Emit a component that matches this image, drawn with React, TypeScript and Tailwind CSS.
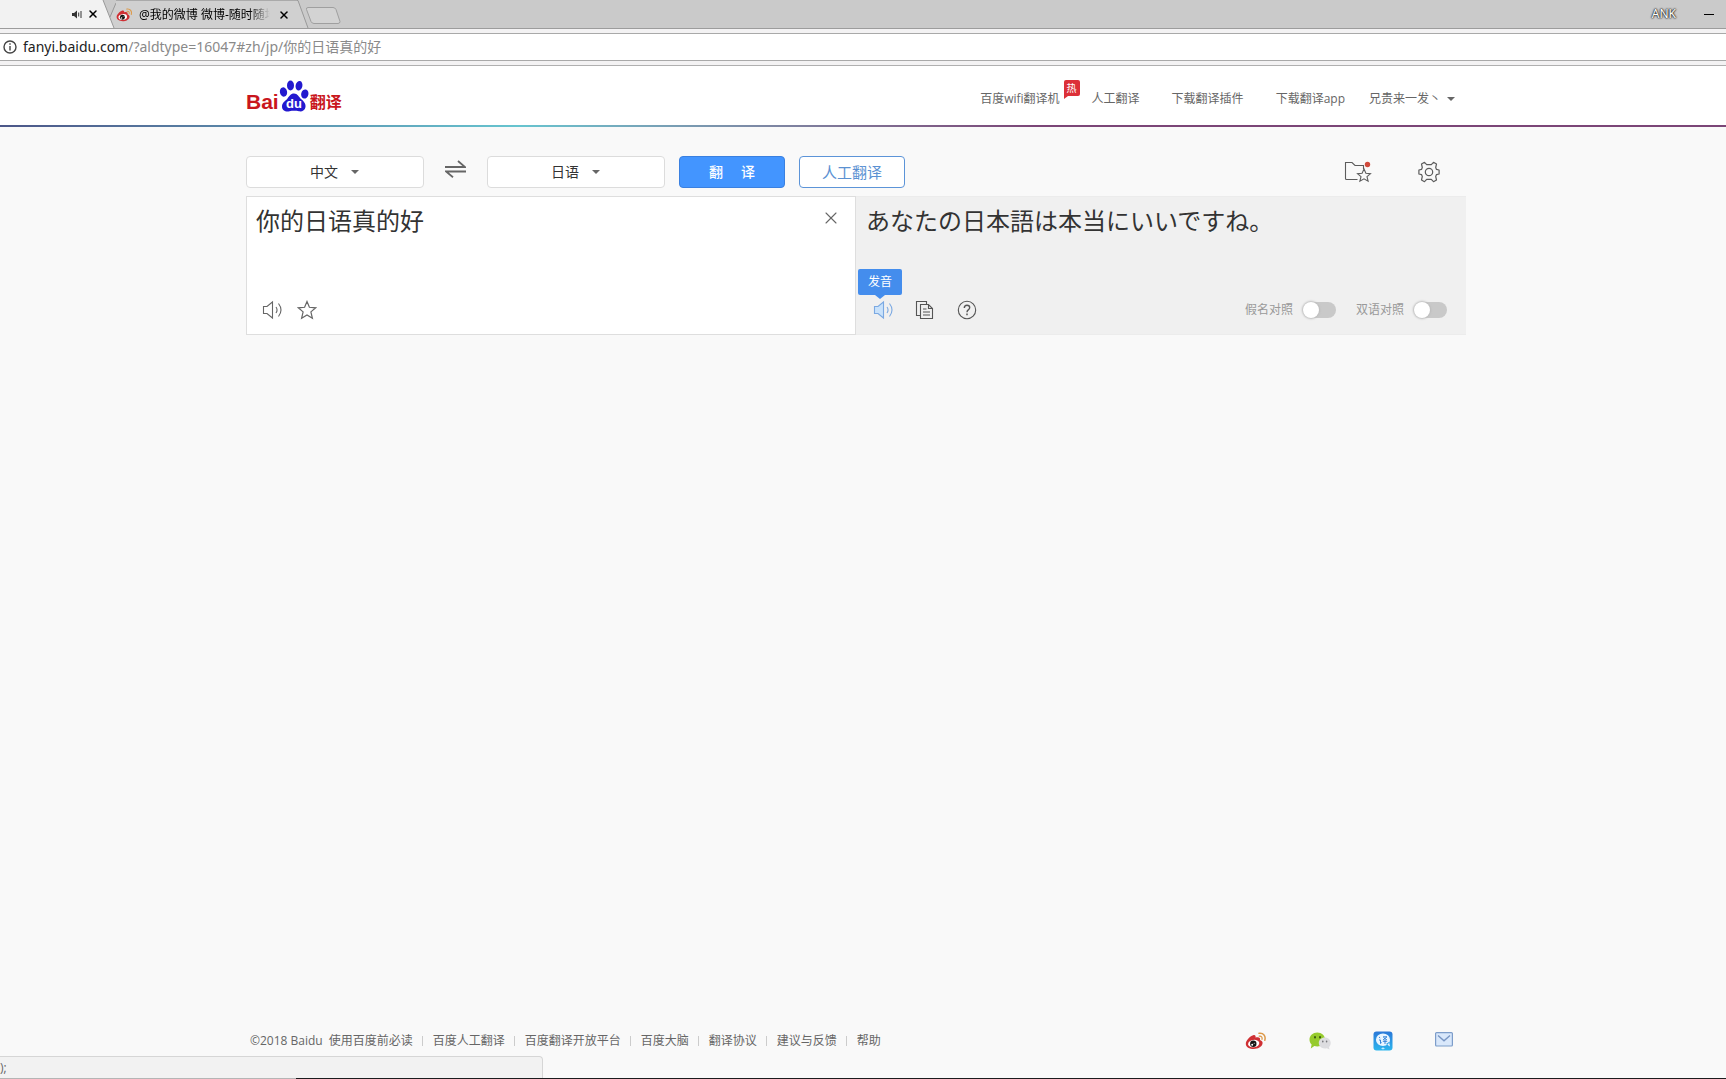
import { useState } from 'react';
import { X } from 'lucide-react';

const navItems = [
  { label: '百度wifi翻译机', hot: true },
  { label: '人工翻译' },
  { label: '下载翻译插件' },
  { label: '下载翻译app' },
];

const footerLinks = [
  '使用百度前必读',
  '百度人工翻译',
  '百度翻译开放平台',
  '百度大脑',
  '翻译协议',
  '建议与反馈',
  '帮助',
];

function WeiboIcon({ className }: { className?: string }) {
  return (
    <svg viewBox="0 0 22 18" className={className} aria-hidden="true">
      <path d="M8.2 3.2C10 2.600 11 3.600 10.500 5.600C13.600 4.600 15.700 5.500 15 8C17 8.700 18 10 17.500 11.800C16.700 15 12.800 17 8.800 17C4.500 17 .8 15 .8 11.700C.8 8.500 4.800 4.300 8.200 3.200Z" fill="#cf3034" />
      <ellipse cx="8.700" cy="11.600" rx="5.600" ry="3.700" fill="#fff" transform="rotate(-8 8.700 11.600)" />
      <circle cx="8.300" cy="11.800" r="3.200" fill="#151515" />
      <circle cx="7.200" cy="12.800" r="1" fill="#fff" />
      <circle cx="9.200" cy="11.200" r=".5" fill="#fff" />
      <path d="M14.300 4.200C16.300 3.800 17.600 5.300 17 7.300" fill="none" stroke="#dd9a4a" strokeWidth="1.300" strokeLinecap="round" />
      <path d="M14 1.300C18.500 .6 21 4 19.800 8.200" fill="none" stroke="#dd9a4a" strokeWidth="1.500" strokeLinecap="round" />
    </svg>
  );
}

function WechatIcon() {
  return (
    <svg viewBox="0 0 22 18" className="h-[18px] w-[22px]" aria-hidden="true">
      <path d="M8.300 .5C12.700 .5 16 3.500 16 7.500C16 11.500 12.700 14.500 8.300 14.500C7.200 14.500 6.200 14.300 5.300 14L1.800 16.600L2.600 12.500C1.200 11.200 .5 9.500 .5 7.500C.5 3.500 4 .5 8.300 .5Z" fill="#96cb2d" />
      <ellipse cx="6" cy="5.300" rx="1" ry="1.300" fill="#3b5a12" />
      <ellipse cx="11" cy="5.300" rx="1" ry="1.300" fill="#3b5a12" />
      <path d="M15.800 5.500C19.300 5.500 21.700 7.900 21.700 11C21.700 12.600 21 14 20 15L20.500 17.400L17.800 16.200C13.200 17.300 9.800 14.600 9.800 11C9.800 7.900 12.300 5.500 15.800 5.500Z" fill="#dddde0" />
      <ellipse cx="13.800" cy="9.500" rx=".8" ry="1.100" fill="#77777b" />
      <ellipse cx="17.600" cy="9.500" rx=".8" ry="1.100" fill="#77777b" />
    </svg>
  );
}

function FanyiAppIcon() {
  return (
    <svg viewBox="0 0 20 20" className="size-5" aria-hidden="true">
      <defs>
        <linearGradient id="appFill" x1="0" y1="0" x2="0" y2="1">
          <stop offset="0" stopColor="#2b78d8" />
          <stop offset="1" stopColor="#2cb6ee" />
        </linearGradient>
      </defs>
      <rect x=".5" y=".5" width="19" height="19" rx="3" fill="url(#appFill)" />
      <path d="M10 2.500A7 6.200 0 1 1 10 15A7 6.200 0 1 1 10 2.500ZM13 13L17 15.500L16 11Z" fill="#e9f5ff" />
      <path d="M6 6L7.200 7M6 9H7.500V12.500L8.700 11.500M10 5.800H14L10 9M10.500 6.500L14 9M9.800 10.300H14.200M12 8.500V13" fill="none" stroke="#2479d4" strokeWidth=".9" />
      <path d="M8.500 17.500H11.500M10 16.300V18.500" stroke="#c9f0ff" strokeWidth=".9" />
    </svg>
  );
}

function MailIcon() {
  return (
    <svg viewBox="0 0 18 15" className="h-[15px] w-[18px]" aria-hidden="true">
      <rect x=".6" y=".6" width="16.800" height="13.400" rx="1" fill="#d9e8fb" stroke="#7d9dca" strokeWidth="1.200" />
      <path d="M3 3.500L9 8.800L15 3.500" fill="none" stroke="#7896c4" strokeWidth="1.400" />
    </svg>
  );
}

function SpeakerIcon({ fill = 'none' }: { fill?: string }) {
  return (
    <svg viewBox="0 0 20 20" className="size-5" fill="none" stroke="currentColor" strokeWidth="1.100" aria-hidden="true">
      <path d="M1.500 6.500H5L10.500 2V18L5 13.500H1.500Z" fill={fill} />
      <path d="M14 7Q16.100 10 14 13M16.500 3.500Q21.500 10 16.500 16.500" />
    </svg>
  );
}

function StarIcon() {
  return (
    <svg viewBox="0 0 20 20" className="size-5" fill="none" stroke="currentColor" strokeWidth="1.200" aria-hidden="true">
      <path d="M10 1.500L12.400 7.300L18.700 7.800L13.900 11.900L15.400 18.300L10 15L4.600 18.300L6.100 11.900L1.300 7.800L7.600 7.300Z" />
    </svg>
  );
}

function CopyIcon() {
  return (
    <svg viewBox="0 0 20 20" className="size-5" fill="none" stroke="currentColor" strokeWidth="1.100" aria-hidden="true">
      <path d="M5 15.500H1.500V1.500H11.500V4" />
      <path d="M5.500 4.500H13.500L17.500 8.500V18.500H5.500ZM13.500 4.500V8.500H17.500M8 9H11.500M8 12H15M8 15H15" />
    </svg>
  );
}

function HelpIcon() {
  return (
    <svg viewBox="0 0 20 20" className="size-5" fill="none" stroke="currentColor" aria-hidden="true">
      <circle cx="10" cy="10" r="8.700" strokeWidth="1.100" />
      <path d="M7.300 8Q7.300 5.200 10 5.200Q12.700 5.200 12.700 7.600Q12.700 9 11.300 9.900Q10 10.800 10 12.200" strokeWidth="1.400" />
      <path d="M10 13.600V15.200" strokeWidth="1.500" />
    </svg>
  );
}

function FolderStarIcon() {
  return (
    <svg viewBox="0 0 28 22" className="h-[22px] w-7" fill="none" stroke="#5c5c5c" strokeWidth="1.100" aria-hidden="true">
      <path d="M13.500 18.500H2.500Q1.500 18.500 1.500 17.500V1.500H8L11 4.500H19.500V8" />
      <path d="M20 8L21.900 12.200L26.500 12.700L23 15.700L24.100 20.200L20 17.800L15.900 20.200L17 15.700L13.500 12.700L18.100 12.200Z" fill="#f9f9f9" />
      <circle cx="23.500" cy="3.500" r="2.700" fill="#d04a3c" stroke="none" />
    </svg>
  );
}

function GearIcon() {
  return (
    <svg viewBox="0 0 22 22" className="size-[22px]" fill="none" stroke="#5c5c5c" strokeWidth="1.200" strokeLinejoin="round" aria-hidden="true">
      <path d="M8.700 3.600L6.500 1.300L3.500 3L4.300 6.500L3.600 8.300L.9 9V13L3.600 13.700L4.300 15.500L3.500 19L6.500 20.700L8.700 18.400H13.300L15.500 20.700L18.500 19L17.700 15.500L18.400 13.700L21.100 13V9L18.400 8.300L17.700 6.500L18.500 3L15.500 1.300L13.300 3.600Z" />
      <circle cx="11" cy="11" r="3.700" />
    </svg>
  );
}

function Caret({ className = '' }: { className?: string }) {
  return (
    <svg viewBox="0 0 8 4" className={`h-1 w-2 ${className}`} fill="#666" aria-hidden="true">
      <path d="M0 0H8L4 4Z" />
    </svg>
  );
}

function BrowserChrome() {
  return (
    <div className="font-['Noto_Sans','Noto_Sans_CJK_SC',sans-serif]">
      {/* Tabs */}
      <div className="flex h-[29px] border-b border-[#9c9c9c] bg-[#cacaca] text-xs text-black">
        <div className="flex w-[102px] items-center justify-end gap-1 bg-[#f2f2f2] pr-[3px]">
          <svg viewBox="0 0 11 9" className="h-[9px] w-[11px]" fill="none" stroke="#333" aria-hidden="true">
            <path d="M0 3H2L5 .5V8.500L2 6H0Z" fill="#333" stroke="none" />
            <path d="M6.700 2.500V6.500M9 1V8" />
          </svg>
          <button aria-label="关闭标签页" className="flex">
            <X className="size-3" strokeWidth={3} />
          </button>
        </div>
        <svg viewBox="0 0 14 28" className="h-7 w-[14px]" aria-hidden="true">
          <path d="M8 17L14 3V28H12Z" fill="#d0d0d0" />
          <path d="M0 0H1L12 28H0Z" fill="#f2f2f2" />
          <path d="M1 0L12 28M8 17L14 3" fill="none" stroke="#999" />
        </svg>
        <div className="flex w-[181px] items-center border-t border-[#aaa] bg-[#d0d0d0] pr-[7px]">
          <WeiboIcon className="h-[14px] w-[17px]" />
          <span className="ml-[6px] bg-linear-to-r from-black from-80% to-transparent to-95% bg-clip-text whitespace-nowrap text-transparent">
            @我的微博 微博-随时随地
          </span>
          <button aria-label="关闭标签页" className="ml-auto flex">
            <X className="size-3" strokeWidth={3} />
          </button>
        </div>
        <svg viewBox="0 0 46 28" className="h-7 w-[46px]" aria-hidden="true">
          <path d="M0 1H1L11 28H0Z" fill="#d0d0d0" />
          <path d="M0 .5H1L11 28" fill="none" stroke="#999" />
          <path d="M11 7.500H36Q38 7.500 39 9.500L43 21.500Q43 23.500 41 23.500H17Q15 23.500 14 21.500L9.500 9.500Q9 7.500 11 7.500Z" fill="#d3d3d3" stroke="#9f9f9f" />
        </svg>
        <div className="ml-auto flex items-center gap-7 pr-3">
          <span className="text-white [text-shadow:0_0_2px_#222,0_0_2px_#222,0_0_1px_#222]">ANK</span>
          <button aria-label="最小化" className="h-px w-[10px] bg-black" />
        </div>
      </div>
      {/* Address bar */}
      <div className="border-b border-[#b0b0b0] bg-[#f3f2f3] py-1">
        <div className="flex h-7 items-center gap-[6px] border-y border-[#a9a9a9] bg-white pl-[3px] text-sm">
          <svg viewBox="0 0 14 14" className="size-[14px]" fill="none" stroke="#444" strokeWidth="1.400" aria-hidden="true">
            <circle cx="7" cy="7" r="6" />
            <path d="M7 6V10.500M7 3.300V4.800" />
          </svg>
          <span className="text-[#8a8a8a]">
            <span className="text-[#222]">fanyi.baidu.com</span>/?aldtype=16047#zh/jp/你的日语真的好
          </span>
        </div>
      </div>
    </div>
  );
}

function Logo() {
  return (
    <a href="#" aria-label="百度翻译" className="flex items-end font-bold text-[#c9161d]">
      <span className="font-['Liberation_Sans',sans-serif] text-[21px] leading-5">Bai</span>
      <svg viewBox="0 0 30 32" className="h-8 w-[30px]" fill="#2319cf" aria-hidden="true">
        <ellipse cx="4.500" cy="12" rx="3.600" ry="4.700" transform="rotate(-12 4.500 12)" />
        <ellipse cx="11.500" cy="5.500" rx="3.500" ry="4.900" />
        <ellipse cx="20" cy="5.800" rx="3.400" ry="4.800" transform="rotate(12 20 5.800)" />
        <ellipse cx="25.800" cy="14" rx="3.600" ry="4.600" transform="rotate(12 25.800 14)" />
        <path d="M15 13.500C18.500 13.500 20 17 22 19C24.500 21 27 23.500 26.500 27C26 30.500 23 31.800 20 31.300C17 30.700 13.500 30.700 10.500 31.300C6.500 32 3 30.500 3 26.500C3 22.500 6.500 21 8.500 18.500C10.300 16.200 11.500 13.500 15 13.500Z" />
        <text x="15" y="28" textAnchor="middle" fontSize="13" fill="#fff" fontFamily="Liberation Sans, sans-serif">du</text>
      </svg>
      <span className="ml-px text-base leading-5">翻译</span>
    </a>
  );
}

function LanguageSelect({ label, options }: { label: string; options: string[] }) {
  return (
    <div className="relative">
      <select
        aria-label={label}
        className="h-8 w-[178px] appearance-none rounded-[4px] border border-[#dcdcdc] bg-white pr-[22px] text-sm text-[#333] [text-align-last:center]"
      >
        {options.map((option) => (
          <option key={option}>{option}</option>
        ))}
      </select>
      <Caret className="pointer-events-none absolute top-[14px] right-[65px]" />
    </div>
  );
}

function Toggle({ label }: { label: string }) {
  return (
    <label className="flex items-center gap-[10px] text-xs text-[#999]">
      {label}
      <input
        type="checkbox"
        className="h-4 w-[33px] appearance-none rounded-full bg-[#c9c9c9] before:block before:size-4 before:rounded-full before:bg-white before:shadow-[0_0_2px_1px_#bbb] checked:bg-[#4395ff] checked:before:translate-x-4"
      />
    </label>
  );
}

export default function App() {
  const [source, setSource] = useState('你的日语真的好');

  return (
    <div className="flex min-h-screen flex-col bg-[#f9f9f9] font-['Open_Sans','Noto_Sans_CJK_SC',sans-serif] text-[#666]">
      <BrowserChrome />

      {/* Header */}
      <header className="bg-white pr-[14px]">
        <div className="mx-auto flex h-[59px] max-w-[1220px] items-center justify-between pr-[11px]">
          <Logo />
          <nav className="flex items-center gap-6 pt-[6px] text-xs">
            <ul className="flex gap-8">
              {navItems.map((item) => (
                <li key={item.label} className="relative">
                  <a href="#">{item.label}</a>
                  {item.hot && (
                    <span className="absolute -top-[11px] left-full ml-1 size-4 rounded-[2px] rounded-bl-none bg-[#dc3038] text-center text-[10px] leading-4 text-white">
                      热
                      <svg viewBox="0 0 4 3" className="absolute top-full left-0 h-[3px] w-1" fill="#dc3038" aria-hidden="true">
                        <path d="M0 0H4L0 3Z" />
                      </svg>
                    </span>
                  )}
                </li>
              ))}
            </ul>
            <button className="flex items-center gap-[6px]">
              兄贵来一发丶
              <Caret />
            </button>
          </nav>
        </div>
      </header>
      <div className="h-[2px] bg-linear-to-r from-[#4c5688] via-[#66c4cf] via-30% to-[#7b4577] to-60%" />

      {/* Translator */}
      <main className="flex-1 pr-[14px]">
        <div className="mx-auto max-w-[1220px] pt-[29px]">
          <div className="flex items-center">
            <LanguageSelect label="源语言" options={['中文', '日语', '英语']} />
            <button aria-label="交换语言" className="mx-[21px] mb-[6px]">
              <svg viewBox="0 0 21 18" className="h-[18px] w-[21px]" fill="none" stroke="#666" strokeWidth="1.800" aria-hidden="true">
                <path d="M0 7H20L13 1M21 11.500H1L8 17.300" />
              </svg>
            </button>
            <LanguageSelect label="目标语言" options={['日语', '中文', '英语']} />
            <button className="ml-[14px] flex h-8 w-[106px] items-center justify-center gap-[18px] rounded-[4px] border border-[#3a80e0] bg-[#4395ff] text-sm font-medium text-white">
              <span>翻</span>
              <span>译</span>
            </button>
            <a
              href="#"
              className="ml-[14px] flex h-8 w-[106px] items-center justify-center rounded-[4px] border border-[#5c94d8] bg-white text-[15px] text-[#5b91d2]"
            >
              人工翻译
            </a>
            <div className="ml-auto flex items-center gap-[46px] pr-[26px]">
              <button aria-label="收藏夹">
                <FolderStarIcon />
              </button>
              <button aria-label="设置">
                <GearIcon />
              </button>
            </div>
          </div>

          <div className="mt-2 grid grid-cols-2">
            <section className="flex h-[139px] flex-col justify-between border border-[#dedede] bg-white">
              <div className="flex items-start">
                <textarea
                  aria-label="原文"
                  value={source}
                  onChange={(e) => setSource(e.target.value)}
                  className="h-[84px] flex-1 resize-none pt-[6px] pl-[9px] text-2xl leading-9 text-[#333] outline-none"
                />
                <button aria-label="清空" onClick={() => setSource('')} className="mt-[11px] mr-[14px]">
                  <X className="size-5 text-[#666]" strokeWidth={1.3} />
                </button>
              </div>
              <div className="flex gap-[15px] pb-[14px] pl-[15px] text-[#666]">
                <button aria-label="发音">
                  <SpeakerIcon />
                </button>
                <button aria-label="收藏">
                  <StarIcon />
                </button>
              </div>
            </section>

            <section className="flex h-[139px] flex-col justify-between border-y border-[#ececec] bg-[#f0f0f0]">
              <p lang="ja" className="pt-[5px] pl-[10px] font-['Noto_Sans_CJK_JP',sans-serif] text-2xl leading-9 text-[#333]">
                あなたの日本語は本当にいいですね。
              </p>
              <div className="flex items-center justify-between pr-[19px] pb-[14px] pl-[17px]">
                <div className="flex items-center gap-[22px] text-[#555]">
                  <div className="relative flex">
                    <button aria-label="发音" className="text-[#7ba9e2]">
                      <SpeakerIcon fill="#c9e2fb" />
                    </button>
                    <div role="tooltip" className="absolute bottom-full -left-[15px] mb-[5px] w-11 rounded-[2px] bg-[#448ded] text-center text-xs leading-[26px] text-white">
                      发音
                      <svg viewBox="0 0 10 4" className="absolute top-full left-[17px] h-1 w-[10px]" fill="#448ded" aria-hidden="true">
                        <path d="M0 0H10L5 4Z" />
                      </svg>
                    </div>
                  </div>
                  <button aria-label="复制">
                    <CopyIcon />
                  </button>
                  <button aria-label="帮助">
                    <HelpIcon />
                  </button>
                </div>
                <div className="flex gap-5">
                  <Toggle label="假名对照" />
                  <Toggle label="双语对照" />
                </div>
              </div>
            </section>
          </div>
        </div>
      </main>

      {/* Footer */}
      <footer className="pr-[14px] pb-7">
        <div className="mx-auto flex max-w-[1220px] items-center justify-between pr-[13px] pl-1 text-xs">
          <div className="flex items-center">
            <span className="mr-[6px]">©2018 Baidu</span>
            <ul className="flex items-center">
              {footerLinks.map((link) => (
                <li key={link} className="group flex items-center">
                  <a href="#">{link}</a>
                  <span className="mr-[10px] ml-[9px] h-[10px] w-px bg-[#ccc] group-last:hidden" />
                </li>
              ))}
            </ul>
          </div>
          <div className="flex items-center gap-[42px]">
            <a href="#" aria-label="微博">
              <WeiboIcon className="h-[18px] w-[22px]" />
            </a>
            <a href="#" aria-label="微信">
              <WechatIcon />
            </a>
            <a href="#" aria-label="翻译应用">
              <FanyiAppIcon />
            </a>
            <a href="#" aria-label="邮箱" className="mb-1">
              <MailIcon />
            </a>
          </div>
        </div>
      </footer>

      {/* Browser status bubble and the screen's lower edge */}
      <div className="fixed inset-x-0 bottom-0">
        <div className="h-[22px] w-[543px] rounded-tr-[4px] border-t border-r border-[#d6d6d6] bg-[#f2f2f2] text-xs leading-[22px] text-[#666]">
          );
        </div>
        <div className="flex h-px bg-[#1c1c1e]">
          <div className="w-[296px] bg-[#b5b5b5]" />
        </div>
      </div>
    </div>
  );
}
